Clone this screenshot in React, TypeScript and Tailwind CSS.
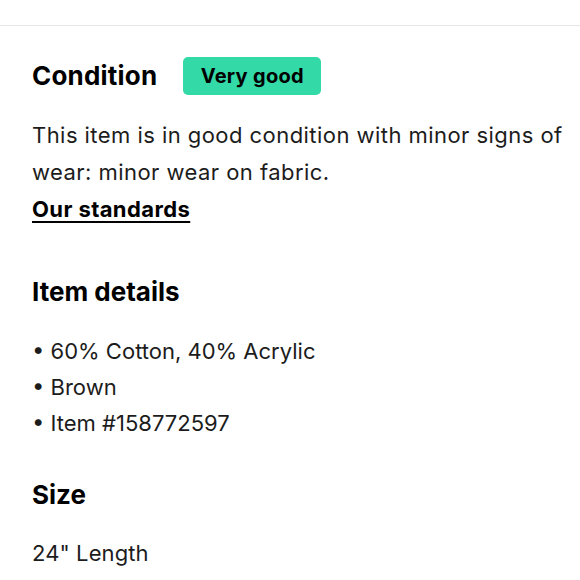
export default function App() {
  return (
    <div className="h-[580px] w-[580px] overflow-hidden bg-white font-['Inter',sans-serif] text-[#1c1c1c]">
      <div className="h-[26px] border-b border-[#e6e6e6]" />
      <div className="pl-8 pr-3">
        <div className="mt-[31px] flex items-center gap-[26px]">
          <h2 className="text-[26px] font-bold leading-[32px] tracking-[0.2px] text-black">Condition</h2>
          <span className="flex h-[38px] w-[138px] items-center justify-center rounded-[5px] bg-[#33d9a6] text-[20px] font-bold tracking-[0.3px] text-black">
            Very good
          </span>
        </div>
        <p className="mt-[22px] text-[22px] leading-[37px] tracking-[0.45px]">
          This item is in good condition with minor signs of wear: minor wear on fabric.
        </p>
        <a href="#" className="block text-[22px] font-bold leading-[37px] tracking-[0.4px] text-black underline decoration-2 underline-offset-[4px]">
          Our standards
        </a>
        <h2 className="mt-[48px] text-[26px] font-bold leading-[32px] text-black">Item details</h2>
        <ul className="mt-[25px] text-[22px] leading-[36px]">
          <li>• 60% Cotton, 40% Acrylic</li>
          <li>• Brown</li>
          <li>• Item #158772597</li>
        </ul>
        <h2 className="mt-[38px] text-[26px] font-bold leading-[32px] text-black">Size</h2>
        <p className="mt-[24px] text-[22px] leading-[37px] tracking-[0.1px]">24" Length</p>
      </div>
    </div>
  );
}
